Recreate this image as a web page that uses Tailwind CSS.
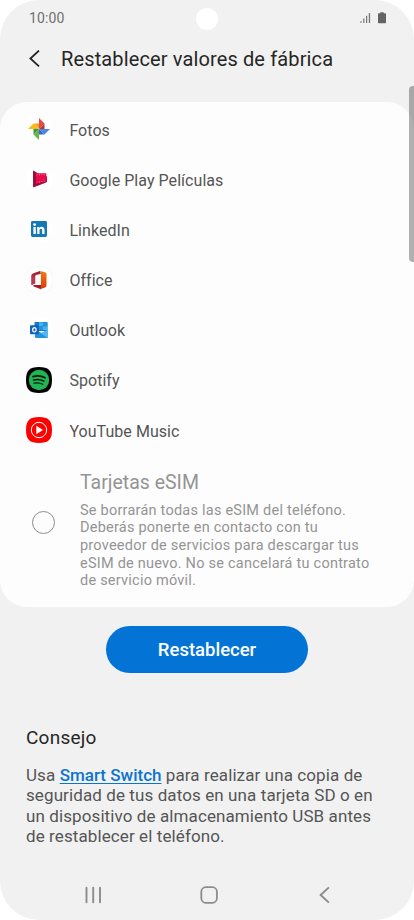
<!DOCTYPE html>
<html lang="es">
<head>
<meta charset="utf-8">
<title>Restablecer valores de fábrica</title>
<script src="https://cdn.jsdelivr.net/npm/@tailwindcss/browser@4"></script>
</head>
<body class="bg-white font-['Roboto',sans-serif]">
<div class="relative flex h-[920px] w-[414px] flex-col overflow-hidden rounded-[39px] bg-[#f1f1f1] text-[#555]">
  <header class="flex h-[36px] shrink-0 items-center justify-between pr-[28px] pl-[29px]">
    <span class="text-[14px] leading-none tracking-[0.1px] text-[#707070]">10:00</span>
    <div class="flex items-center gap-[7px]">
      <svg class="h-[12px] w-[11px]" viewBox="0 0 11 12" fill="#777"><rect x="0.5" y="9" width="1" height="2"/><rect x="3.2" y="6.5" width="1.2" height="4.5"/><rect x="6" y="3.8" width="1.2" height="7.2"/><rect x="8.8" y="1" width="1.3" height="10"/></svg>
      <svg class="h-[12px] w-[8px]" viewBox="0 0 8 12" fill="#646464"><path d="M2.3 .3h3.4v1H7.2q.8 0 .8.8v8.3q0 .8-.8.8H.8q-.8 0-.8-.8V2.100q0-.8.8-.8h1.500z"/></svg>
    </div>
  </header>
  <div class="absolute top-[8px] left-[196px] size-[22px] rounded-full bg-white"></div>

  <div class="flex h-[66px] shrink-0 items-start pt-[11px] pl-[29px]">
    <svg class="mt-[3px] h-[18px] w-[11px]" viewBox="0 0 11 18" fill="none" stroke="#262626" stroke-width="1.800"><path d="M10 .6 1.400 8.500 10 16.400"/></svg>
    <h1 class="ml-[21px] text-[20px] leading-[24px] tracking-[0.130px] whitespace-nowrap text-[#262626]">Restablecer valores de fábrica</h1>
  </div>

  <main class="h-[505px] shrink-0 rounded-[27px] bg-[#fdfdfd] pt-[3px]">
    <ul class="text-[16px] leading-[20px] tracking-[0.050px]">
      <li class="flex h-[50.200px] items-center gap-[17.400px] pl-[26px]">
        <span class="-mt-[2px] flex size-[26px] items-center justify-center rounded-[10px] bg-white">
          <svg class="size-[22px]" viewBox="0 0 22 22"><path fill="#f9b916" d="M0 11 5.500 5.500 11 11z"/><path fill="#f4a51c" d="M5.500 5.500H11V11z"/><path fill="#e64a3c" d="M11 0 16.500 5.500 11 11z"/><path fill="#b93443" d="M16.500 5.500V11H11z"/><path fill="#4a86ee" d="M22 11 16.500 16.500 11 11z"/><path fill="#3267ce" d="M16.500 16.500H11V11z"/><path fill="#68b83f" d="M11 22 5.500 16.500 11 11z"/><path fill="#37964a" d="M5.500 16.500V11H11z"/></svg>
        </span><span class="pt-[1px]">Fotos</span>
      </li>
      <li class="flex h-[50.200px] items-center gap-[17.400px] pl-[26px]">
        <span class="-mt-[2px] flex size-[26px] items-center justify-center rounded-[10px] bg-white">
          <svg class="size-[22px]" viewBox="0 0 22 22"><path fill="#9c0d40" d="M5 3v15.700q0 .8.800.5L18.200 14.500q.8-.4.800-1.200V8.500L10 5.500 5.800 2.700Q5 2.200 5 3z"/><path fill="#e60b4b" d="M8 5.300H18.300V13.300L8 15.800z"/><g fill="#ff7f9f"><path d="M8.600 6.300h.9v.9h-.9zM11 6.300h.9v.9H11zM13.400 6.300h.9v.9h-.9zM15.800 6.300h.9v.9h-.9zM8.600 13.700h.9v.9h-.9zM11 13.500h.9v.9H11zM13.400 13h.9v.9h-.9zM15.800 12.500h.9v.9h-.9z"/></g></svg>
        </span><span class="pt-[1px]">Google Play Películas</span>
      </li>
      <li class="flex h-[50.200px] items-center gap-[17.400px] pl-[26px]">
        <span class="-mt-[2px] flex size-[26px] items-center justify-center rounded-[10px] bg-white">
          <svg class="size-[16px]" viewBox="0 0 16 16"><rect width="16" height="16" rx="1.400" fill="#137ab6"/><g fill="#fff"><circle cx="3.600" cy="3.600" r="1.400"/><path d="M2.400 6h2.400v7H2.400zM6.200 6h2.100v1c.5-.8 1.300-1.200 2.300-1.200 2.100 0 2.900 1.300 2.900 3.500V13h-2.300V9.700c0-1.100-.3-1.900-1.200-1.900-1.100 0-1.500.8-1.500 1.900V13H6.200z"/></g></svg>
        </span><span class="pt-[1px]">LinkedIn</span>
      </li>
      <li class="flex h-[50.200px] items-center gap-[17.400px] pl-[26px]">
        <span class="-mt-[2px] flex size-[26px] items-center justify-center rounded-[10px] bg-white shadow-[0_0_1px_#ddd]">
          <svg class="size-[20px]" viewBox="0 0 20 20"><defs><linearGradient id="of" x1="0" y1="0" x2="0" y2="1"><stop offset="0" stop-color="#8d1c2c"/><stop offset=".5" stop-color="#c03a4a"/><stop offset="1" stop-color="#b33672"/></linearGradient><linearGradient id="or" x1="0" y1="0" x2="0" y2="1"><stop offset="0" stop-color="#f37a12"/><stop offset="1" stop-color="#d83a0b"/></linearGradient></defs><path fill="url(#of)" d="M11 .9 4.500 3.300Q2.200 4 2.200 6v8.500q0 .8.800.5l3.300-1.400V6.300q0-1 1-1.300L12 3.700z"/><path fill="#a41c2c" d="M5 15.100h7V19.300L4.700 16.500q-1.200-.9.300-1.400z"/><path fill="url(#or)" d="M11 .9 16 2.300q1.500.5 1.500 2V15.500q0 1.500-1.500 2L11 19.300q.9-.6.900-1.800V3z"/></svg>
        </span><span>Office</span>
      </li>
      <li class="flex h-[50.200px] items-center gap-[17.400px] pl-[26px]">
        <span class="-mt-[2px] flex size-[26px] items-center justify-center rounded-[10px] bg-white">
          <svg class="h-[16px] w-[18px]" viewBox="0 0 18 16"><rect x="4.500" y="0" width="13" height="9" rx=".7" fill="#1676c8"/><path fill="#41b4ef" d="M9 .2h4v4H9zM13 4.200h4.300v3.800H13z"/><path fill="#2593dc" d="M13 .2h4.300v4H13zM9 4.200h4V8H9z"/><path fill="#2593dc" d="M5 7.500 11.500 11 18 7.500V15q0 1-1 1H6q-1 0-1-1z"/><path fill="#54b8f0" d="M18 7.500V15q0 .7-.5 1L11 11.300z"/><rect x="0" y="3.200" width="8.800" height="9" rx=".8" fill="#1262b8"/><ellipse cx="4.400" cy="7.700" rx="1.700" ry="2.100" fill="none" stroke="#fff" stroke-width="1.200"/></svg>
        </span><span>Outlook</span>
      </li>
      <li class="flex h-[50.200px] items-center gap-[17.400px] pl-[26px]">
        <svg class="-mt-[2px] size-[26px]" viewBox="0 0 26 26"><path d="M13 0C22.500 0 26 3.500 26 13s-3.500 13-13 13S0 22.500 0 13 3.500 0 13 0z"/><circle cx="13" cy="13" r="10.200" fill="#20b455"/><g fill="none" stroke="#071c0d" stroke-linecap="round"><path stroke-width="1.800" d="M7 9.600c4.300-1.200 8.500-.8 12 1.200"/><path stroke-width="1.500" d="M7.500 13c3.800-1 7.200-.6 10.500 1.200"/><path stroke-width="1.300" d="M8 16.200c3.300-.8 6-.5 8.700 1.100"/></g></svg>
        <span>Spotify</span>
      </li>
      <li class="flex h-[50.200px] items-center gap-[17.400px] pl-[26px]">
        <svg class="-mt-[2px] size-[26px]" viewBox="0 0 26 26"><path fill="#f00" d="M13 0C22.500 0 26 3.500 26 13s-3.500 13-13 13S0 22.500 0 13 3.500 0 13 0z"/><circle cx="13" cy="13" r="7.700" fill="none" stroke="#fff" stroke-width="1"/><path fill="#fff" d="M10.300 8.800v8.400L17 13z"/></svg>
        <span class="pt-[1px]">YouTube Music</span>
      </li>
    </ul>
    <section class="flex pt-[15px] pl-[32px] text-[#949494]">
      <span class="mt-[40px] size-[23px] shrink-0 rounded-full border border-[#8c8c8c]"></span>
      <div class="pl-[25px] whitespace-nowrap">
        <h2 class="text-[19.500px] leading-[24px]">Tarjetas eSIM</h2>
        <p class="mt-[6.500px] text-[14.500px] leading-[17.650px] tracking-[0.230px]">Se borrarán todas las eSIM del teléfono.<br>Deberás ponerte en contacto con tu<br>proveedor de servicios para descargar tus<br>eSIM de nuevo. No se cancelará tu contrato<br>de servicio móvil.</p>
      </div>
    </section>
  </main>
  <div class="absolute top-[86px] left-[409px] h-[176px] w-[8px] rounded-[4px] bg-black/30"></div>

  <button class="mt-[19px] ml-[106px] h-[47px] w-[202px] shrink-0 rounded-full bg-[#0374d6] pt-[3px] text-[18.500px] font-medium text-white">Restablecer</button>

  <section class="mt-[53px] h-[143px] shrink-0 pl-[26px] whitespace-nowrap">
    <h2 class="text-[19px] leading-[24px] tracking-[0.250px] text-[#262626]">Consejo</h2>
    <p class="mt-[15px] text-[17px] leading-[20.400px] tracking-[0.100px]">Usa <a class="font-medium tracking-normal text-[#0b74ce] underline decoration-1 underline-offset-2">Smart Switch</a> para realizar una copia de<br>seguridad de tus datos en una tarjeta SD o en<br>un dispositivo de almacenamiento USB antes<br>de restablecer el teléfono.</p>
  </section>

  <nav class="flex grow items-center pt-[1px] pl-[85px]">
    <svg class="h-[18px] w-[17px]" viewBox="0 0 17 18" fill="none" stroke="#8c8c8c" stroke-width="1.900" stroke-linecap="round"><path d="M1.500 1.800v14.400M8.200 1.800v14.400M15 1.800v14.400"/></svg>
    <svg class="ml-[97.500px] size-[18px]" viewBox="0 0 18 18" fill="none" stroke="#8c8c8c" stroke-width="1.800"><rect x="1.300" y="1.200" width="15.600" height="15.600" rx="4.500"/></svg>
    <svg class="ml-[101.500px] h-[18px] w-[11px]" viewBox="0 0 11 18" fill="none" stroke="#8c8c8c" stroke-width="1.900"><path d="M9.900 1.400 1.600 9l8.300 7.600"/></svg>
  </nav>
</div>
</body>
</html>
